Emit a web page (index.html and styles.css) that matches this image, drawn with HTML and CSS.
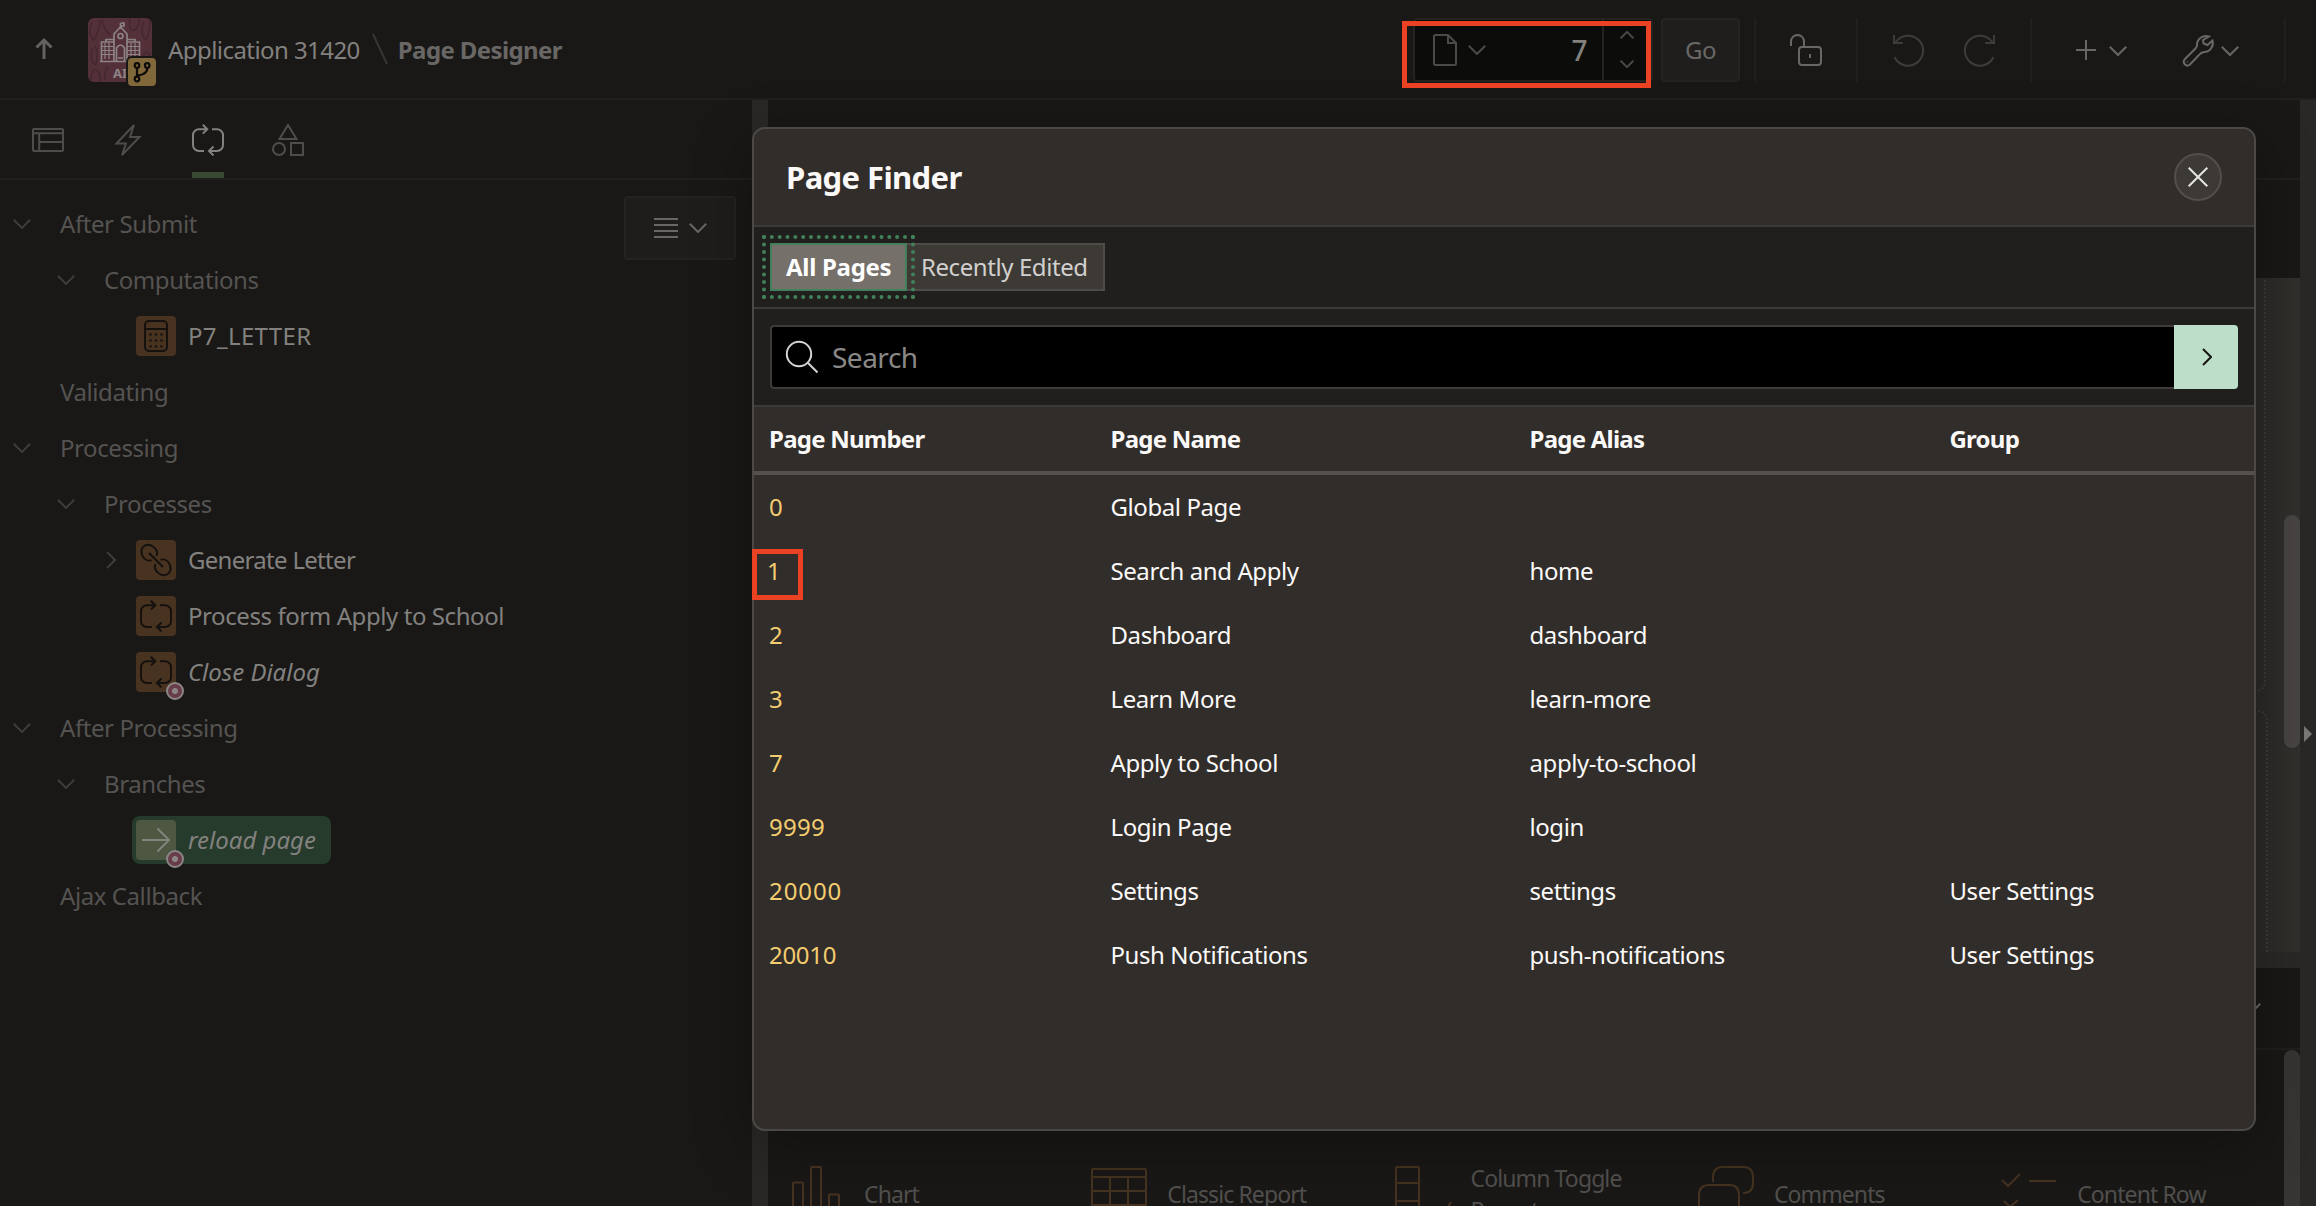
FILE: index.html
```html
<!DOCTYPE html>
<html lang="en">
<head>
<meta charset="utf-8">
<title>Page Designer</title>
<link rel="stylesheet" href="styles.css">
</head>
<body>
<svg class="sprite" aria-hidden="true">
  <symbol id="chev" viewBox="0 0 18 10"><path d="M.8.8 9 9 17.2.8"/></symbol>
  <symbol id="chev-right" viewBox="0 0 10 18"><path d="M1 1 9 9 1 17"/></symbol>
  <symbol id="process" viewBox="0 0 32 32"><path d="M15 5.200H7a6 6 0 0 0-6 6V21a6 6 0 0 0 6 6h5M10.800.8l4.500 4.400-4.500 4.400M20 5.200h5a6 6 0 0 1 6 6V21a6 6 0 0 1-6 6h-8M21.500 22.500 17 27l4.500 4.400"/></symbol>
</svg>

<header class="topbar">
  <svg class="up" viewBox="0 0 18 22"><path d="M9 21V2M1.500 9.500 9 2l7.500 7.500"/></svg>
  <div class="app-icon">
    <svg viewBox="0 0 64 64">
      <g class="swirl"><path d="M4 4q-5 14 2 18q5-8 6-20M14 2q3 12 8 14M42 0q-2 14 5 12q5-6 4-12M55 4q-3 14 3 18q4-8 4-20M4 30q-2 18 4 16q3-12-1-18M3 62q1-14 7-9q3 5 2 11M17 62q-1-12 4-12M55 38q4-8 6-2q0 12-5 10M44 60"/></g>
      <g class="school">
        <path d="M32.500 5v6M33 5h3v3h-3M26 43V16l6.500-7 6.500 7v27M12 43.500h41M18 24v-2.500h8M39 21.500h8V24M13.500 43V24H26M39 24h12.500V43"/>
        <circle cx="32.500" cy="18" r="2.500"/><path d="M28.500 43V30q4-6 8 0v13M30 40h5"/>
        <path class="win" d="M14 28.500h12M14 32.500h12M14 36.500h12M17 25v16M21 25v16M39 28.500h12M39 32.500h12M39 36.500h12M43 25v16M47 25v16"/>
      </g>
    </svg>
    <span class="app-code">AI</span>
    <span class="branch"><svg viewBox="0 0 28 28"><path d="M9 10v9M9.500 17.500q10-1 10-8M9 15"/><circle cx="9" cy="7.500" r="2.300"/><circle cx="9" cy="21" r="2.300"/><circle cx="19.200" cy="7.500" r="2.300"/></svg></span>
  </div>
  <span class="crumb">Application 31420</span>
  <svg class="slash" viewBox="0 0 16 32"><path d="M1 1 15 31"/></svg>
  <span class="crumb current">Page Designer</span>

  <div class="tools">
    <div class="page-input">
      <svg class="doc" viewBox="0 0 24 32"><path d="M1 2.500Q1 1 2.500 1H15l8 8v20.500q0 1.500-1.500 1.500h-19Q1 31 1 29.500zM15 1v8h8"/></svg>
      <svg class="chev"><use href="#chev"/></svg>
      <span class="num">7</span>
      <div class="spin"><svg class="flip"><use href="#chev"/></svg><svg><use href="#chev"/></svg></div>
    </div>
    <div class="go">Go</div>
    <div class="group lock"><svg viewBox="0 0 32 32"><path d="M1 12V7.500a6.500 6.500 0 0 1 13 0V13M20 20v4"/><rect x="9" y="13" width="22" height="18" rx="3"/></svg></div>
    <div class="group history">
      <svg viewBox="0 0 32 32"><path d="M1 1v8h9M2.500 8.500A15 15 0 1 1 1.500 23"/></svg>
      <svg class="mirror" viewBox="0 0 32 32"><path d="M1 1v8h9M2.500 8.500A15 15 0 1 1 1.500 23"/></svg>
    </div>
    <div class="group menus">
      <svg class="plus" viewBox="0 0 20 20"><path d="M10 0v20M0 10h20"/></svg>
      <svg class="chev"><use href="#chev"/></svg>
      <svg class="wrench" viewBox="0 0 32 32"><path d="M27 2.500A9 9 0 0 0 15 11.500Q15 13 12 16L2.500 25.500a3.800 3.800 0 0 0 5 5.500L17 21Q19 18.500 22 18a9 9 0 0 0 8.500-11.500L25.500 11 21.500 9.500 21 6zM5.400 27.500v.8"/></svg>
      <svg class="chev"><use href="#chev"/></svg>
    </div>
    <div class="group tail"></div>
  </div>
</header>

<div class="workspace">
  <aside class="sidebar">
    <nav class="tabs">
      <span class="tab"><svg viewBox="0 0 32 32"><rect x="1" y="5" width="30" height="22" rx="1"/><path d="M1 9.200h30M7.200 9.200V27M7.200 18H31"/></svg></span>
      <span class="tab"><svg viewBox="0 0 32 32"><path d="M22 1 4.500 19.500H14L10 31 27.500 13H18z"/></svg></span>
      <span class="tab active"><svg><use href="#process"/></svg></span>
      <span class="tab"><svg viewBox="0 0 32 32"><path d="M16 1 24.500 15h-17z"/><circle cx="7" cy="25" r="6"/><rect x="19" y="19" width="12" height="12"/></svg></span>
    </nav>
    <div class="tree-pane">
      <ul class="tree">
        <li class="l1"><svg class="chev"><use href="#chev"/></svg>After Submit</li>
        <li class="l2"><svg class="chev"><use href="#chev"/></svg>Computations</li>
        <li class="l3"><i class="box"><svg viewBox="0 0 32 32"><rect x="5" y="1" width="22" height="30" rx="4"/><path d="M5 9h22"/><path class="keys" d="M10.500 13.500v2M16 13.500v2M21.500 13.500v2M10.500 19.500v2M16 19.500v2M21.500 19.500v2M10.500 25.500v2M16 25.500v2M21.500 25.500v2"/></svg></i><span class="upper">P7_LETTER</span></li>
        <li class="l1"><span class="nochev"></span>Validating</li>
        <li class="l1"><svg class="chev"><use href="#chev"/></svg>Processing</li>
        <li class="l2"><svg class="chev"><use href="#chev"/></svg>Processes</li>
        <li class="l3"><svg class="expand"><use href="#chev-right"/></svg><i class="box"><svg viewBox="0 0 32 32"><path d="M11.500 16.300A7.600 7.600 0 0 1 2.800 12.500C1 9 .500 6 3 3.200S9.500 0 13 2.500s5 6 3.600 9.500M20.500 15.700A7.600 7.600 0 0 1 29.200 19.500C31 23 31.500 26 29 28.800S22.500 32 19 29.500s-5-6-3.600-9.500M9 9l14 14"/></svg></i><span class="snug">Generate Letter</span></li>
        <li class="l3"><i class="box"><svg><use href="#process"/></svg></i>Process form Apply to School</li>
        <li class="l3 italic"><i class="box"><svg><use href="#process"/></svg><b class="dot"></b></i>Close Dialog</li>
        <li class="l1"><svg class="chev"><use href="#chev"/></svg>After Processing</li>
        <li class="l2"><svg class="chev"><use href="#chev"/></svg>Branches</li>
        <li class="l3 italic"><span class="selected"><i class="box"><svg viewBox="0 0 32 32"><path d="M2 16h27M17.500 4.500 29 16 17.500 27.500"/></svg><b class="dot"></b></i>reload page</span></li>
        <li class="l1"><span class="nochev"></span>Ajax Callback</li>
      </ul>
      <div class="menu-btn"><svg class="lines" viewBox="0 0 24 20"><path d="M0 1h24M0 7h24M0 13h24M0 19h24"/></svg><svg class="chev"><use href="#chev"/></svg></div>
    </div>
  </aside>
  <div class="splitter"></div>
  <main class="center">
    <div class="pane-tabs"></div>
    <div class="pane-bar"></div>
    <div class="canvas">
      <div class="region first"></div>
      <div class="region second"></div>
      <div class="thumb"></div>
    </div>
    <div class="hsplit"></div>
    <div class="gallery-bar"><svg class="chev"><use href="#chev"/></svg></div>
    <div class="gallery">
      <div class="item"><svg viewBox="0 0 56 56"><path d="M5 56V17.500q0-1 1-1h8q1 0 1 1V56M23 56V2q0-1 1-1h8q1 0 1 1v54M41 56V29.500q0-1 1-1h8q1 0 1 1V56"/></svg><span>Chart</span></div>
      <div class="item"><svg viewBox="0 0 56 56"><path d="M1 54V4q0-1 1-1h52q1 0 1 1v50M1 11h54M1 25h54M1 39h54M19 11v43M37 11v43"/></svg><span>Classic Report</span></div>
      <div class="item"><svg viewBox="0 0 56 56"><path d="M1 56V2q0-1 1-1h21q1 0 1 1v54M1 17h23M1 35h23M51 44l5-8"/></svg><span class="two-line">Column Toggle<br>Report</span></div>
      <div class="item"><svg viewBox="0 0 56 56"><path d="M15 16V11Q15 1 25 1h20q10 0 10 10v6q0 10-10 10M1 56V29Q1 19 11 19h20q10 0 10 10v27"/></svg><span>Comments</span></div>
      <div class="item"><svg viewBox="0 0 56 56"><path d="M1 14l6 6L19 8M28 15h27M3 35l6 6 8-7"/></svg><span>Content Row</span></div>
      <div class="thumb low"></div>
    </div>
  </main>
  <div class="splitter right"><svg viewBox="0 0 8 16"><path d="M0 0 8 8 0 16z"/></svg></div>
</div>

<section class="dialog">
  <div class="dialog-head"><h1>Page Finder</h1><span class="close"><svg viewBox="0 0 20 20"><path d="M.7.7l18.600 18.600M19.300.7.7 19.300"/></svg></span></div>
  <div class="dialog-tabs"><span class="pill on">All Pages</span><span class="pill">Recently Edited</span></div>
  <div class="search-row">
    <div class="field"><svg viewBox="0 0 32 32"><circle cx="13" cy="13" r="12.200"/><path d="m22 22 9.500 9.500"/></svg>Search</div>
    <div class="submit"><svg><use href="#chev-right"/></svg></div>
  </div>
  <div class="row head"><span>Page Number</span><span>Page Name</span><span>Page Alias</span><span>Group</span></div>
  <div class="row"><a>0</a><span>Global Page</span></div>
  <div class="row"><a class="one">1</a><span>Search and Apply</span><span>home</span></div>
  <div class="row"><a>2</a><span>Dashboard</span><span>dashboard</span></div>
  <div class="row"><a>3</a><span>Learn More</span><span>learn-more</span></div>
  <div class="row"><a>7</a><span>Apply to School</span><span>apply-to-school</span></div>
  <div class="row"><a>9999</a><span>Login Page</span><span>login</span></div>
  <div class="row"><a class="wide">20000</a><span>Settings</span><span>settings</span><span>User Settings</span></div>
  <div class="row"><a class="tight">20010</a><span>Push Notifications</span><span>push-notifications</span><span>User Settings</span></div>
</section>

<div class="mark mark-input"></div>
<div class="mark mark-row"></div>
</body>
</html>
```
FILE: styles.css
```css
* { box-sizing: border-box; }
body {
  margin: 0;
  width: 2316px;
  height: 1206px;
  overflow: hidden;
  position: relative;
  display: flex;
  flex-direction: column;
  background: #191816;
  color: #83817f;
  font: 24px/32px "Noto Sans", "Open Sans", sans-serif;
  letter-spacing: -0.42px;
  white-space: nowrap;
}
svg { fill: none; stroke: currentColor; stroke-width: 2; display: block; flex: none; overflow: visible; }
.sprite { position: absolute; width: 0; height: 0; }
.chev { width: 18px; height: 10px; }

/* top bar */
.topbar { height: 100px; flex: none; border-bottom: 2px solid #201f1e; display: flex; align-items: center; padding-left: 35px; }
.up { width: 18px; height: 22px; color: #646260; stroke-width: 3; }
.app-icon { position: relative; width: 64px; height: 64px; margin: 2px 16px 0 35px; border-radius: 6px; background: #543039; }
.app-icon > svg { width: 64px; height: 64px; }
.swirl { stroke: #44282f; stroke-width: 1.5; }
.school { stroke: #8c8385; stroke-width: 1.7; }
.win { stroke-width: 1.2; }
.app-code { position: absolute; left: 25px; top: 45px; font: 700 13px/20px "Noto Sans", sans-serif; color: #8c8385; letter-spacing: 0; }
.branch { position: absolute; left: 38px; top: 38px; width: 32px; height: 32px; border: 2px solid #191816; border-radius: 6px; background: #80683a; color: #0d0c0b; }
.branch svg { width: 28px; height: 28px; stroke-width: 2.2; }
.crumb { padding-top: 2px; letter-spacing: -0.56px; }
.crumb.current { font-weight: 700; color: #696765; letter-spacing: -0.6px; }
.slash { width: 16px; height: 32px; margin: 0 10px 0 12px; color: #383634; }
.tools { margin-left: auto; display: flex; color: #696765; padding-top: 2px; }
.page-input { width: 240px; height: 64px; border: 2px solid #242322; border-radius: 4px; background: #0c0c0b; display: flex; align-items: center; padding-left: 18px; color: #4c4a48; }
.doc { width: 24px; height: 32px; }
.page-input > .chev { margin-left: 11px; }
.num { margin-left: auto; margin-right: 15px; font-size: 28px; color: #83817f; font-weight: 500; }
.spin { width: 49px; height: 60px; border-left: 2px solid #242322; display: flex; flex-direction: column; align-items: center; justify-content: space-between; padding: 11px 2px 12px 0; }
.spin svg { width: 14px; height: 8px; stroke-width: 2.4; }
.flip { transform: scaleY(-1); }
.go { width: 79px; height: 64px; margin-left: 8px; border: 2px solid #242322; border-radius: 4px; background: #1f1e1d; text-align: center; line-height: 60px; }
.group { height: 64px; border-left: 2px solid #201f1e; display: flex; align-items: center; }
.group svg:not(.chev):not(.plus) { width: 32px; height: 32px; }
.lock { width: 102px; margin-left: 14px; padding-left: 34px; }
.history { width: 174px; padding-left: 35px; gap: 38px; color: #3e3c3a; }
.history svg:not(.chev) { width: 31px; }
.mirror { transform: scaleX(-1); }
.menus { width: 254px; padding-left: 44px; }
.plus { width: 20px; height: 20px; }
.plus + .chev { margin: 2px 55px 0 13px; }
.wrench + .chev { margin: 2px 0 0 7px; }
.tail { width: 32px; }

/* work area */
.workspace { flex: 1; min-height: 0; display: flex; }
.splitter { flex: none; width: 16px; background: #292826; }
.right { display: flex; align-items: flex-start; padding: 626px 0 0 4px; }
.right svg { width: 8px; height: 16px; fill: #7b7977; stroke: none; }
.sidebar { flex: none; width: 752px; display: flex; flex-direction: column; }
.tabs { height: 80px; border-bottom: 2px solid #201f1e; padding: 0 8px; display: flex; color: #4f4d4b; }
.tab { width: 80px; display: flex; flex-direction: column; align-items: center; padding-top: 24px; }
.tab svg { width: 32px; height: 32px; }
.tab.active { color: #83817f; }
.tab.active::after { content: ""; width: 32px; height: 6px; margin-top: 16px; background: #3a4934; }
.tree-pane { flex: 1; display: flex; justify-content: space-between; align-items: flex-start; padding: 16px 16px 0 0; }
.tree { list-style: none; margin: 0; padding: 0; }
.tree li { height: 56px; display: flex; align-items: center; }
.l1 { padding-left: 13px; color: #555351; }
.l1 .chev, .l2 .chev { margin-right: 29px; color: #3e3c3a; }
.l2 { padding-left: 57px; color: #555351; }
.nochev { width: 47px; }
.l3 { padding-left: 136px; }
.upper { letter-spacing: 0.35px; }
.snug { letter-spacing: -0.7px; }
.expand { width: 10px; height: 18px; margin-left: -30px; margin-right: 20px; color: #3e3c3a; }
.italic { font-style: italic; letter-spacing: 0; }
.box { position: relative; width: 40px; height: 40px; margin-right: 12px; border-radius: 4px; background: #483220; color: #14110e; padding: 4px; }
.box svg { width: 32px; height: 32px; }
.keys { stroke-width: 2.4; }
.dot { position: absolute; left: 30px; top: 30px; width: 18px; height: 18px; border: 2px solid #8b8586; border-radius: 50%; background: radial-gradient(circle, #8b8586 0 2.7px, #693c49 3.300px); }
.selected { display: flex; align-items: center; height: 48px; margin-left: -4px; padding: 0 15px 0 4px; border-radius: 8px; background: #263b2b; }
.selected .box { background: #4d5742; color: #83857d; }
.menu-btn { width: 112px; height: 64px; border: 2px solid #242322; border-radius: 4px; background: #1e1d1c; display: flex; align-items: center; justify-content: center; gap: 11px; color: #696765; }
.lines { width: 24px; height: 20px; }

/* center pane */
.center { flex: 1; min-width: 0; display: flex; flex-direction: column; }
.pane-tabs { height: 80px; border-bottom: 2px solid #201f1e; }
.pane-bar { height: 98px; }
.canvas { position: relative; height: 674px; background: linear-gradient(90deg, #2a2927 0 1490px, #2e2c29 1506px, #32302d 1532px); overflow: hidden; }
.region { position: absolute; left: 40px; border: 2px dotted #3c3b38; border-radius: 10px; }
.first { top: -20px; width: 1458px; height: 434px; }
.second { top: 432px; width: 1460px; height: 400px; }
.thumb { position: absolute; right: 0; top: 237px; width: 16px; height: 233px; border-radius: 8px; background: #474443; }
.hsplit { height: 16px; background: #292826; }
.gallery-bar { height: 82px; border-bottom: 2px solid #201f1e; display: flex; align-items: center; justify-content: flex-end; padding-right: 39px; color: #696765; }
.gallery { position: relative; flex: 1; display: grid; grid-template-columns: repeat(5, 303.3px); padding: 116px 0 0 20px; overflow: hidden; color: #51504e; font-size: 23px; line-height: 24px; letter-spacing: -0.9px; }
.item { height: 56px; display: flex; align-items: center; gap: 20px; }
.item svg { width: 56px; height: 56px; color: #463321; }
.two-line { line-height: 32px; }
.low { top: 0; height: 240px; background: #363533; }

/* page finder */
.dialog { position: absolute; left: 752px; top: 127px; width: 1504px; height: 1004px; border: 2px solid #4c4845; border-radius: 13px; background: #312d2a; color: #fbf9f8; overflow: hidden; box-shadow: 0 16px 60px rgba(0, 0, 0, .3); }
.dialog-head { height: 98px; border-bottom: 2px solid #3c3936; display: flex; align-items: center; justify-content: space-between; padding: 0 32px; }
h1 { margin: 0; font-size: 31px; letter-spacing: -0.6px; }
.close { width: 48px; height: 48px; border: 2px solid #524e4a; border-radius: 50%; background: #3d3a36; display: grid; place-items: center; color: #e6e4e2; }
.close svg { width: 20px; height: 20px; }
.dialog-tabs { height: 82px; border-bottom: 2px solid #3c3936; background: #201f1d; padding: 16px; display: flex; }
.pill { height: 48px; width: 198px; border: 2px solid #4f4b48; border-left: 0; background: #3d3a36; color: #d2d0ce; line-height: 44px; padding-left: 14px; letter-spacing: -0.42px; }
.pill.on { position: relative; width: 137px; border: 2px solid #41805a; background: #757069; color: #fff; font-weight: 700; letter-spacing: -0.3px; outline: 4px dotted #41805a; outline-offset: 4px; }
.search-row { height: 98px; border-bottom: 2px solid #3c3936; background: #201f1d; padding: 16px; display: flex; }
.field { flex: 1; height: 64px; border: 2px solid #3d3a37; border-right: 0; border-radius: 4px 0 0 4px; background: #000; display: flex; align-items: center; gap: 14px; padding-left: 14px; font-size: 28px; color: #8a8886; letter-spacing: -0.5px; }
.field svg { width: 32px; height: 32px; color: #d6d4d2; }
.submit { width: 64px; height: 64px; border-radius: 0 4px 4px 0; background: #bddfca; color: #161513; display: grid; place-items: center; padding-left: 1px; }
.submit svg { width: 10px; height: 18px; }
.row { height: 64px; display: grid; grid-template-columns: 341.5px 419px 420px 1fr; align-items: center; padding-left: 15px; }
.row.head { height: 68px; border-bottom: 4px solid #54504c; font-weight: 700; letter-spacing: -0.76px; }
.row a { color: #f3cc6f; letter-spacing: 0.3px; }
.row .one { margin-left: -2px; }
.row .wide { letter-spacing: 0.9px; }
.row .tight { letter-spacing: -0.3px; }

/* highlight frames */
.mark { position: absolute; border: 5px solid #eb4224; }
.mark-input { left: 1402px; top: 21px; width: 249px; height: 67px; }
.mark-row { left: 752px; top: 549px; width: 51px; height: 51px; }
```
